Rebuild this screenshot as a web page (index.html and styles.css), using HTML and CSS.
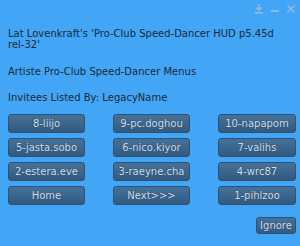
FILE: index.html
```html
<!DOCTYPE html>
<html lang="en">

<head>
    <meta charset="UTF-8">
    <title>Pro-Club Speed-Dancer</title>
    <link rel="stylesheet" href="styles.css">
</head>

<body>
    <div class="dialog">
        <div class="titleBar">
            <svg class="tbIcon" width="10" height="10" viewBox="0 0 10 10">
                <path d="M5 0 V6 M2.5 3.5 L5 6 L7.5 3.5" fill="none" stroke="#8fbbe0" stroke-width="1.6"/>
                <rect x="1" y="8" width="8" height="1.6" fill="#8fbbe0"/>
            </svg>
            <svg class="tbIcon" width="10" height="10" viewBox="0 0 10 10">
                <rect x="1" y="6" width="8" height="2" fill="#8fbbe0"/>
            </svg>
            <svg class="tbIcon" width="10" height="10" viewBox="0 0 10 10">
                <path d="M1.5 1.5 L8.5 8.5 M8.5 1.5 L1.5 8.5" fill="none" stroke="#8fbbe0" stroke-width="1.6"/>
            </svg>
        </div>
        <p class="title">Lat Lovenkraft's 'Pro-Club Speed-Dancer HUD p5.45d rel-32'</p>
        <p class="line">Artiste Pro-Club Speed-Dancer Menus</p>
        <p class="line">Invitees Listed By: LegacyName</p>
        <div class="btnGrid">
            <div class="btn">8-liijo</div>
            <div class="btn">9-pc.doghou</div>
            <div class="btn">10-napapom</div>
            <div class="btn">5-jasta.sobo</div>
            <div class="btn">6-nico.kiyor</div>
            <div class="btn">7-valihs</div>
            <div class="btn">2-estera.eve</div>
            <div class="btn">3-raeyne.cha</div>
            <div class="btn">4-wrc87</div>
            <div class="btn">Home</div>
            <div class="btn">Next&gt;&gt;&gt;</div>
            <div class="btn">1-pihlzoo</div>
        </div>
        <div class="footer">
            <div class="btn ignore">Ignore</div>
        </div>
    </div>
</body>

</html>
```

FILE: styles.css
```css
* {
    padding: 0;
    margin: 0;
}

body {
    width: 300px;
    height: 246px;
    overflow: hidden;
    background: #42a5f5;
    font-family: "DejaVu Sans", sans-serif;
    font-size: 10px;
    color: #1b2a3a;
}

.dialog {
    padding: 0 4px 0 8px;
}

.titleBar {
    height: 17px;
    display: flex;
    justify-content: flex-end;
    align-items: center;
    gap: 6px;
}

.titleBar .tbIcon {
    display: block;
}

.title {
    margin-top: 11px;
    line-height: 11px;
    width: 280px;
}

.line {
    line-height: 11px;
    margin-top: 16px;
}

.line + .line {
    margin-top: 15px;
}

.btnGrid {
    margin-top: 11px;
    display: grid;
    grid-template-columns: 77px 77px 78px;
    column-gap: 28px;
    row-gap: 5px;
}

.btn {
    height: 17px;
    line-height: 17px;
    text-align: center;
    color: #d3dbe4;
    font-size: 10px;
    background: linear-gradient(#44729b, #335a7f);
    border: 1px solid #2d5274;
    border-radius: 3px;
    text-shadow: 0 0 1px #233f5a;
    white-space: nowrap;
    overflow: hidden;
}

.footer {
    margin-top: 12px;
    display: flex;
    justify-content: flex-end;
}

.btn.ignore {
    width: 38px;
    height: 15px;
    line-height: 15px;
}
```
